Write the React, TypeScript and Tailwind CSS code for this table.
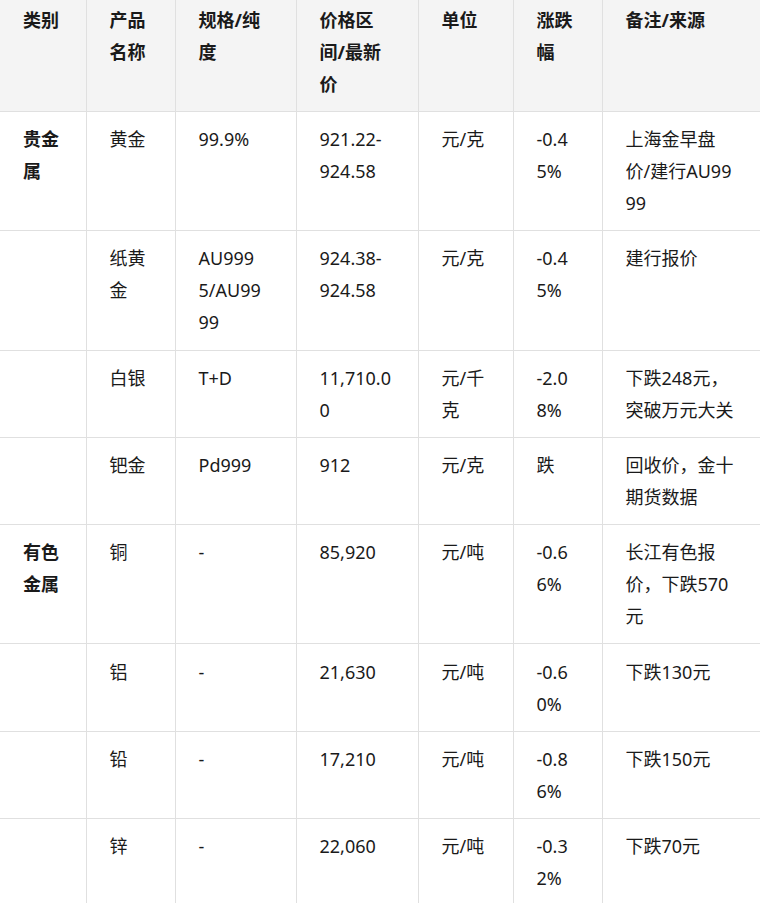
import React from 'react';

type Row = string[];

const header: Row = ['类别', '产品\n名称', '规格/纯\n度', '价格区\n间/最新\n价', '单位', '涨跌\n幅', '备注/来源'];

const rows: Row[] = [
  ['贵金\n属', '黄金', '99.9%', '921.22-\n924.58', '元/克', '-0.4\n5%', '上海金早盘\n价/建行AU99\n99'],
  ['', '纸黄\n金', 'AU999\n5/AU99\n99', '924.38-\n924.58', '元/克', '-0.4\n5%', '建行报价'],
  ['', '白银', 'T+D', '11,710.0\n0', '元/千\n克', '-2.0\n8%', '下跌248元，\n突破万元大关'],
  ['', '钯金', 'Pd999', '912', '元/克', '跌', '回收价，金十\n期货数据'],
  ['有色\n金属', '铜', '-', '85,920', '元/吨', '-0.6\n6%', '长江有色报\n价，下跌570\n元'],
  ['', '铝', '-', '21,630', '元/吨', '-0.6\n0%', '下跌130元'],
  ['', '铅', '-', '17,210', '元/吨', '-0.8\n6%', '下跌150元'],
  ['', '锌', '-', '22,060', '元/吨', '-0.3\n2%', '下跌70元'],
];

// column widths measured off the page, last one runs past the window edge
const widths = [86, 89, 121, 122, 95, 89, 178];

export default function App() {
  return (
    <div
      className="w-[760px] h-[903px] overflow-hidden bg-white text-[#1a1a1a]"
      style={{ fontFamily: '"Noto Sans", "Noto Sans CJK SC", sans-serif' }}
    >
      <table className="w-[780px] table-fixed border-collapse text-[18px] leading-[32px]">
        <colgroup>
          {widths.map((w, i) => (
            <col key={i} style={{ width: w }} />
          ))}
        </colgroup>
        <thead>
          <tr className="bg-[#f4f4f4]">
            {header.map((h, i) => (
              <th
                key={i}
                className="border-r border-b border-[#e0e0e0] pt-[4px] pb-[11px] pr-2 pl-[23px] text-left align-top font-bold whitespace-pre-line"
              >
                {h}
              </th>
            ))}
          </tr>
        </thead>
        <tbody>
          {rows.map((r, ri) => (
            <tr key={ri}>
              {r.map((c, ci) => (
                <td
                  key={ci}
                  className={
                    'border-r border-b border-[#e0e0e0] py-[11.15px] pr-2 pl-[23px] align-top whitespace-pre-line ' +
                    (ci === 0 ? 'font-bold' : 'font-normal')
                  }
                >
                  {c}
                </td>
              ))}
            </tr>
          ))}
        </tbody>
      </table>
    </div>
  );
}
